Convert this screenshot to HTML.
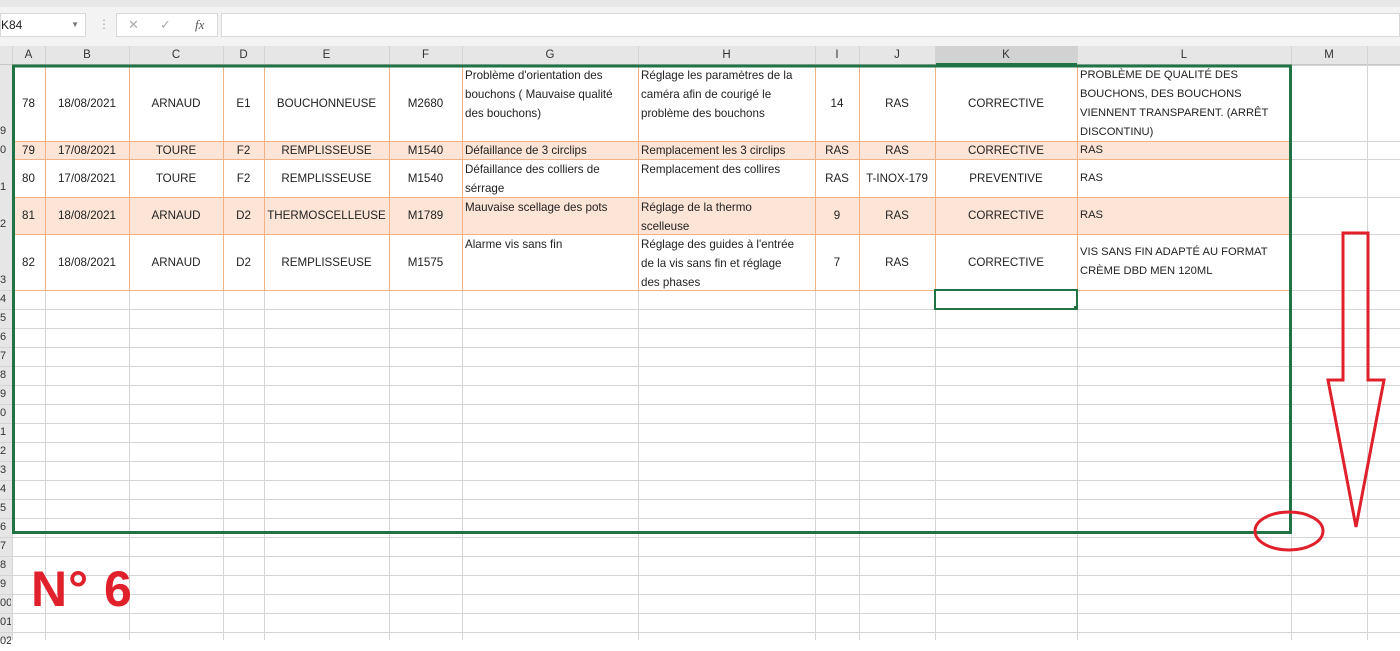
<!DOCTYPE html>
<html><head><meta charset="utf-8"><style>
*{margin:0;padding:0;box-sizing:border-box}
body{width:1400px;height:640px;overflow:hidden;background:#fff;font-family:"Liberation Sans",sans-serif;position:relative;color:#222}
.a{position:absolute}
.c{position:absolute;font-size:11.6px;line-height:19px;white-space:nowrap;overflow:hidden;display:flex;align-items:center;justify-content:center;text-align:center}
.l{justify-content:flex-start;text-align:left;padding-left:3px}
.t{align-items:flex-start;padding-top:1px}
.h{position:absolute;top:46px;height:19px;font-size:11.5px;line-height:19px;text-align:center;color:#333}
.r{position:absolute;left:0;width:11px;height:19px;overflow:hidden;font-size:11px;line-height:19px;text-align:left;color:#333}
</style></head><body>
<div class="a" style="left:0;top:0;width:1400px;height:46px;background:#f3f3f3"></div>
<div class="a" style="left:0;top:0;width:1400px;height:7px;background:#e8e8e8"></div>
<div class="a" style="left:0;top:13px;width:86px;height:24px;background:#fff;border:1px solid #d8d8d8;font-size:12px;line-height:22px;padding-left:0">K84<span style="position:absolute;right:6px;font-size:8px;color:#777">▼</span></div>
<div class="a" style="left:98px;top:17px;color:#aaa;font-size:12px">⋮</div>
<div class="a" style="left:116px;top:13px;width:102px;height:24px;background:#fff;border:1px solid #d8d8d8;font-size:13px;line-height:22px;color:#aaa"><span style="position:absolute;left:11px">✕</span><span style="position:absolute;left:43px">✓</span><span style="position:absolute;left:78px;color:#555;font-style:italic;font-family:'Liberation Serif',serif">fx</span></div>
<div class="a" style="left:221px;top:13px;width:1179px;height:24px;background:#fff;border:1px solid #d8d8d8"></div>
<div class="a" style="left:0;top:46px;width:1400px;height:19px;background:#e6e6e6;border-bottom:1px solid #c8c8c8"></div>
<div class="a" style="left:935px;top:46px;width:142px;height:19px;background:#d2d2d2;border-bottom:2px solid #217346"></div>
<div class="a" style="left:0;top:65px;width:12px;height:575px;background:#e6e6e6"></div>
<svg class="a" style="left:0;top:0" width="1400" height="640">
<g stroke="#d4d4d4" stroke-width="1">
<path d="M12.5 46V640M45.5 46V640M129.5 46V640M223.5 46V640M264.5 46V640M389.5 46V640M462.5 46V640M638.5 46V640M815.5 46V640M859.5 46V640M935.5 46V640M1077.5 46V640M1291.5 46V640M1367.5 46V640"/>
<path d="M0 309.5H1400M0 328.5H1400M0 347.5H1400M0 366.5H1400M0 385.5H1400M0 404.5H1400M0 423.5H1400M0 442.5H1400M0 461.5H1400M0 480.5H1400M0 499.5H1400M0 518.5H1400M0 537.5H1400M0 556.5H1400M0 575.5H1400M0 594.5H1400M0 613.5H1400M0 632.5H1400M1291 65.5H1400M1291 141.5H1400M1291 159.5H1400M1291 197.5H1400M1291 234.5H1400M0 290.5H1400"/>
</g>
<rect x="12" y="141" width="1279" height="18" fill="#fce4d6"/>
<rect x="12" y="197" width="1279" height="37" fill="#fce4d6"/>
<g stroke="#f4b183" stroke-width="1">
<path d="M12 141.5H1291M12 159.5H1291M12 197.5H1291M12 234.5H1291M12 290.5H1291"/>
<path d="M45.5 65V290M129.5 65V290M223.5 65V290M264.5 65V290M389.5 65V290M462.5 65V290M638.5 65V290M815.5 65V290M859.5 65V290M935.5 65V290M1077.5 65V290"/>
</g>
<rect x="13.5" y="66" width="1277" height="466.5" fill="none" stroke="#217346" stroke-width="3"/>
<rect x="935" y="290" width="142" height="19" fill="none" stroke="#217346" stroke-width="2"/>
<rect x="1074" y="306" width="4" height="4" fill="#217346"/>
<path d="M1343 233H1368V380H1384L1356 527L1328 380H1343Z" fill="none" stroke="#e0202a" stroke-width="3"/>
<ellipse cx="1289" cy="531" rx="34" ry="19" fill="none" stroke="#e0202a" stroke-width="3"/>
</svg>
<div class="h" style="left:12px;width:33px">A</div><div class="h" style="left:45px;width:84px">B</div><div class="h" style="left:129px;width:94px">C</div><div class="h" style="left:223px;width:41px">D</div><div class="h" style="left:264px;width:125px">E</div><div class="h" style="left:389px;width:73px">F</div><div class="h" style="left:462px;width:176px">G</div><div class="h" style="left:638px;width:177px">H</div><div class="h" style="left:815px;width:44px">I</div><div class="h" style="left:859px;width:76px">J</div><div class="h" style="left:935px;width:142px">K</div><div class="h" style="left:1077px;width:214px">L</div><div class="h" style="left:1291px;width:76px">M</div>
<div class="r" style="top:122px">9</div><div class="r" style="top:141px">0</div><div class="r" style="top:178px">1</div><div class="r" style="top:215px">2</div><div class="r" style="top:271px">3</div>
<div class="r" style="top:290px">4</div><div class="r" style="top:309px">5</div><div class="r" style="top:328px">6</div><div class="r" style="top:347px">7</div><div class="r" style="top:366px">8</div><div class="r" style="top:385px">9</div><div class="r" style="top:404px">0</div><div class="r" style="top:423px">1</div><div class="r" style="top:442px">2</div><div class="r" style="top:461px">3</div><div class="r" style="top:480px">4</div><div class="r" style="top:499px">5</div><div class="r" style="top:518px">6</div><div class="r" style="top:537px">7</div><div class="r" style="top:556px">8</div><div class="r" style="top:575px">9</div><div class="r" style="top:594px">00</div><div class="r" style="top:613px">01</div><div class="r" style="top:632px">02</div>

<div class="c" style="left:12px;top:65px;width:33px;height:76px">78</div>
<div class="c" style="left:45px;top:65px;width:84px;height:76px">18/08/2021</div>
<div class="c" style="left:129px;top:65px;width:94px;height:76px">ARNAUD</div>
<div class="c" style="left:223px;top:65px;width:41px;height:76px">E1</div>
<div class="c" style="left:264px;top:65px;width:125px;height:76px">BOUCHONNEUSE</div>
<div class="c" style="left:389px;top:65px;width:73px;height:76px">M2680</div>
<div class="c l t" style="left:462px;top:65px;width:176px;height:76px">Problème d'orientation des<br>bouchons ( Mauvaise qualité<br>des bouchons)</div>
<div class="c l t" style="left:638px;top:65px;width:177px;height:76px">Réglage les paramètres de la<br>caméra afin de courigé le<br>problème des bouchons</div>
<div class="c" style="left:815px;top:65px;width:44px;height:76px">14</div>
<div class="c" style="left:859px;top:65px;width:76px;height:76px">RAS</div>
<div class="c" style="left:935px;top:65px;width:142px;height:76px">CORRECTIVE</div>
<div class="c l t" style="left:1077px;top:65px;width:214px;height:76px;font-size:11.2px">PROBLÈME DE QUALITÉ DES<br>BOUCHONS, DES BOUCHONS<br>VIENNENT TRANSPARENT. (ARRÊT<br>DISCONTINU)</div>

<div class="c" style="left:12px;top:141px;width:33px;height:18px">79</div>
<div class="c" style="left:45px;top:141px;width:84px;height:18px">17/08/2021</div>
<div class="c" style="left:129px;top:141px;width:94px;height:18px">TOURE</div>
<div class="c" style="left:223px;top:141px;width:41px;height:18px">F2</div>
<div class="c" style="left:264px;top:141px;width:125px;height:18px">REMPLISSEUSE</div>
<div class="c" style="left:389px;top:141px;width:73px;height:18px">M1540</div>
<div class="c l" style="left:462px;top:141px;width:176px;height:18px">Défaillance de 3 circlips</div>
<div class="c l" style="left:638px;top:141px;width:177px;height:18px">Remplacement les 3 circlips</div>
<div class="c" style="left:815px;top:141px;width:44px;height:18px">RAS</div>
<div class="c" style="left:859px;top:141px;width:76px;height:18px">RAS</div>
<div class="c" style="left:935px;top:141px;width:142px;height:18px">CORRECTIVE</div>
<div class="c l" style="left:1077px;top:141px;width:214px;height:18px;font-size:11.2px">RAS</div>

<div class="c" style="left:12px;top:159px;width:33px;height:38px">80</div>
<div class="c" style="left:45px;top:159px;width:84px;height:38px">17/08/2021</div>
<div class="c" style="left:129px;top:159px;width:94px;height:38px">TOURE</div>
<div class="c" style="left:223px;top:159px;width:41px;height:38px">F2</div>
<div class="c" style="left:264px;top:159px;width:125px;height:38px">REMPLISSEUSE</div>
<div class="c" style="left:389px;top:159px;width:73px;height:38px">M1540</div>
<div class="c l t" style="left:462px;top:159px;width:176px;height:38px">Défaillance des colliers de<br>sérrage</div>
<div class="c l t" style="left:638px;top:159px;width:177px;height:38px">Remplacement des collires</div>
<div class="c" style="left:815px;top:159px;width:44px;height:38px">RAS</div>
<div class="c" style="left:859px;top:159px;width:76px;height:38px">T-INOX-179</div>
<div class="c" style="left:935px;top:159px;width:142px;height:38px">PREVENTIVE</div>
<div class="c l" style="left:1077px;top:159px;width:214px;height:38px;font-size:11.2px">RAS</div>

<div class="c" style="left:12px;top:197px;width:33px;height:37px">81</div>
<div class="c" style="left:45px;top:197px;width:84px;height:37px">18/08/2021</div>
<div class="c" style="left:129px;top:197px;width:94px;height:37px">ARNAUD</div>
<div class="c" style="left:223px;top:197px;width:41px;height:37px">D2</div>
<div class="c" style="left:264px;top:197px;width:125px;height:37px">THERMOSCELLEUSE</div>
<div class="c" style="left:389px;top:197px;width:73px;height:37px">M1789</div>
<div class="c l t" style="left:462px;top:197px;width:176px;height:37px">Mauvaise scellage des pots</div>
<div class="c l t" style="left:638px;top:197px;width:177px;height:37px">Réglage de la thermo<br>scelleuse</div>
<div class="c" style="left:815px;top:197px;width:44px;height:37px">9</div>
<div class="c" style="left:859px;top:197px;width:76px;height:37px">RAS</div>
<div class="c" style="left:935px;top:197px;width:142px;height:37px">CORRECTIVE</div>
<div class="c l" style="left:1077px;top:197px;width:214px;height:37px;font-size:11.2px">RAS</div>

<div class="c" style="left:12px;top:234px;width:33px;height:56px">82</div>
<div class="c" style="left:45px;top:234px;width:84px;height:56px">18/08/2021</div>
<div class="c" style="left:129px;top:234px;width:94px;height:56px">ARNAUD</div>
<div class="c" style="left:223px;top:234px;width:41px;height:56px">D2</div>
<div class="c" style="left:264px;top:234px;width:125px;height:56px">REMPLISSEUSE</div>
<div class="c" style="left:389px;top:234px;width:73px;height:56px">M1575</div>
<div class="c l t" style="left:462px;top:234px;width:176px;height:56px">Alarme vis sans fin</div>
<div class="c l t" style="left:638px;top:234px;width:177px;height:56px">Réglage des guides à l'entrée<br>de la vis sans fin et réglage<br>des phases</div>
<div class="c" style="left:815px;top:234px;width:44px;height:56px">7</div>
<div class="c" style="left:859px;top:234px;width:76px;height:56px">RAS</div>
<div class="c" style="left:935px;top:234px;width:142px;height:56px">CORRECTIVE</div>
<div class="c l" style="left:1077px;top:234px;width:214px;height:56px;font-size:11.2px">VIS SANS FIN ADAPTÉ AU FORMAT<br>CRÈME DBD MEN 120ML</div>

<div class="a" style="left:31px;top:560px;font-size:50px;font-weight:bold;color:#e0202a;line-height:58px;letter-spacing:1px">N° 6</div>
</body></html>
